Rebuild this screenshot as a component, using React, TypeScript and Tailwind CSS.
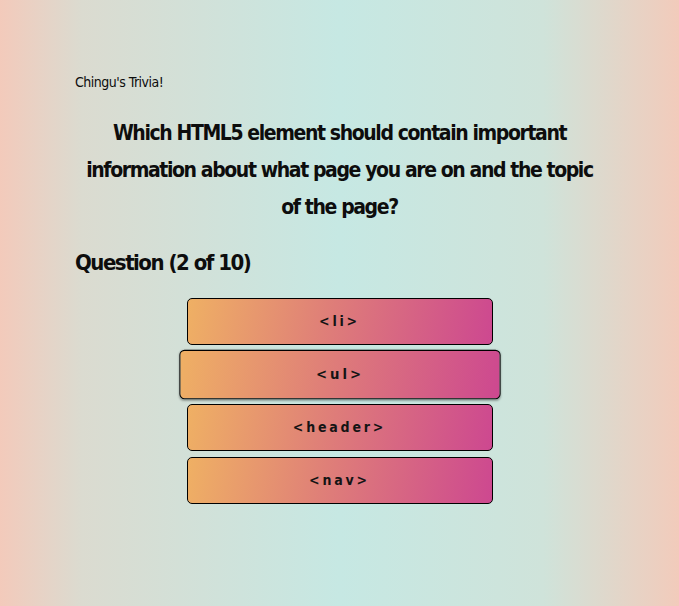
const options = ["<li>", "<ul>", "<header>", "<nav>"];

const App = () => {
  return (
    <div
      className="min-h-[606px] w-full bg-[linear-gradient(to_right,#f3cabb_0%,#dbdbd0_12%,#c6e8e3_50%,#cfe3da_80%,#f2cbbb_100%)] text-[#0d0d0d]"
      style={{ fontFamily: '"Liberation Sans Narrow", "DejaVu Sans Condensed", "Liberation Sans", sans-serif' }}
    >
      <div className="px-[75px] pt-[72px]">
        <h1 className="text-[14px] leading-5 tracking-[-0.5px] [font-stretch:condensed]">Chingu's Trivia!</h1>
        <h2 className="mt-[23px] text-center text-[21px] font-bold leading-[37px] tracking-[-1.4px] [font-stretch:condensed]">
          Which HTML5 element should contain important information about what page you are on and the topic of the
          page?
        </h2>
        <h3 className="mt-[21px] text-[22px] font-bold leading-8 tracking-[-1.5px] [font-stretch:condensed]">
          Question (2 of 10)
        </h3>
        <div className="mt-[19px] flex flex-col items-center gap-[6px]">
          {options.map((opt, i) => (
            <button
              key={opt}
              className={`flex h-[47px] w-[306px] items-center justify-center rounded-[5px] border border-black bg-[linear-gradient(100deg,#efb064,#df7f78_45%,#cd4890)] text-[14px] font-bold tracking-[0.2em] text-[#141414] [font-stretch:condensed] ${
                i === 1 ? "scale-105 border-[#333] shadow-[0_1px_2px_rgba(0,0,0,0.3)]" : ""
              }`}
            >
              {opt}
            </button>
          ))}
        </div>
      </div>
    </div>
  );
};

export default App;
